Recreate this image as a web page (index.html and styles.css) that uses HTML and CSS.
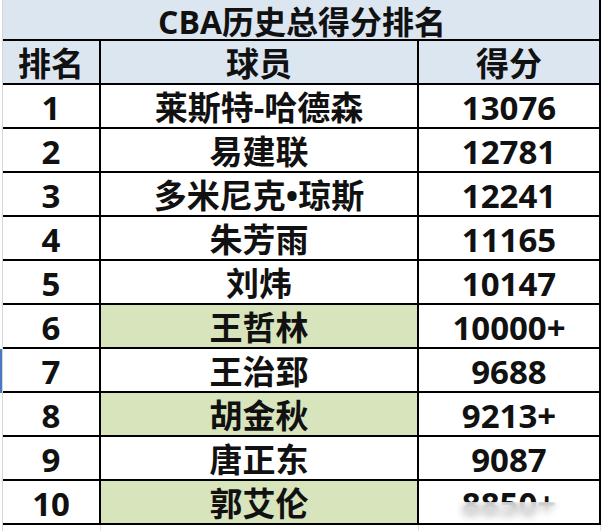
FILE: index.html
```html
<!DOCTYPE html>
<html lang="zh">
<head>
<meta charset="utf-8">
<title>CBA历史总得分排名</title>
<link rel="stylesheet" href="styles.css">
</head>
<body>
<div class="sheet">
  <div class="gut"></div><div class="cell title">CBA历史总得分排名</div>
  <div class="gut"></div><div class="cell hd">排名</div><div class="cell hd">球员</div><div class="cell hd">得分</div>
  <div class="gut"></div><div class="cell">1</div><div class="cell">莱斯特-哈德森</div><div class="cell">13076</div>
  <div class="gut"></div><div class="cell">2</div><div class="cell">易建联</div><div class="cell">12781</div>
  <div class="gut"></div><div class="cell">3</div><div class="cell">多米尼克•琼斯</div><div class="cell">12241</div>
  <div class="gut"></div><div class="cell">4</div><div class="cell">朱芳雨</div><div class="cell">11165</div>
  <div class="gut"></div><div class="cell">5</div><div class="cell">刘炜</div><div class="cell">10147</div>
  <div class="gut"></div><div class="cell">6</div><div class="cell green">王哲林</div><div class="cell">10000+</div>
  <div class="gut sel"></div><div class="cell">7</div><div class="cell">王治郅</div><div class="cell">9688</div>
  <div class="gut"></div><div class="cell">8</div><div class="cell green">胡金秋</div><div class="cell">9213+</div>
  <div class="gut"></div><div class="cell">9</div><div class="cell">唐正东</div><div class="cell">9087</div>
  <div class="gut"></div><div class="cell">10</div><div class="cell green">郭艾伦</div><div class="cell last">8850+<span class="mark"></span></div>
  <div class="gut"></div><div class="tail"></div><div class="tail"></div><div class="tail"></div>
</div>
</body>
</html>
```
FILE: styles.css
```css
html, body {
  margin: 0;
  padding: 0;
  background: #ffffff;
}
.sheet {
  display: grid;
  grid-template-columns: 3px 98px 318px 182px;
  grid-template-rows: 41px repeat(11, 44px) 10px;
  font-family: "Open Sans", "Noto Sans CJK SC", sans-serif;
  font-weight: 700;
  font-size: 33px;
  color: #111111;
}
.gut {
  border-right: 1px solid #d6d6d6;
  background: #ffffff;
}
.gut.sel {
  background: #4a78c9;
}
.cell {
  border-right: 2px solid #000000;
  border-bottom: 2px solid #000000;
  display: flex;
  align-items: center;
  justify-content: center;
  padding-top: 3px;
  line-height: 1;
  white-space: nowrap;
  background: #ffffff;
  overflow: hidden;
}
.title {
  grid-column: 2 / 5;
  background: #dce6f1;
  font-size: 32px;
  align-items: flex-start;
  padding-top: 6px;
  padding-left: 2px;
  overflow: visible;
}
.hd {
  background: #dce6f1;
}
.green {
  background: #d8e4bc;
}
.last {
  position: relative;
}
.mark {
  position: absolute;
  left: 38px;
  top: 21px;
  width: 135px;
  height: 20px;
  background: rgba(255, 255, 255, 0.7);
  backdrop-filter: blur(4px);
}
.tail {
  border-right: 1px solid #e2e2e2;
}
```
